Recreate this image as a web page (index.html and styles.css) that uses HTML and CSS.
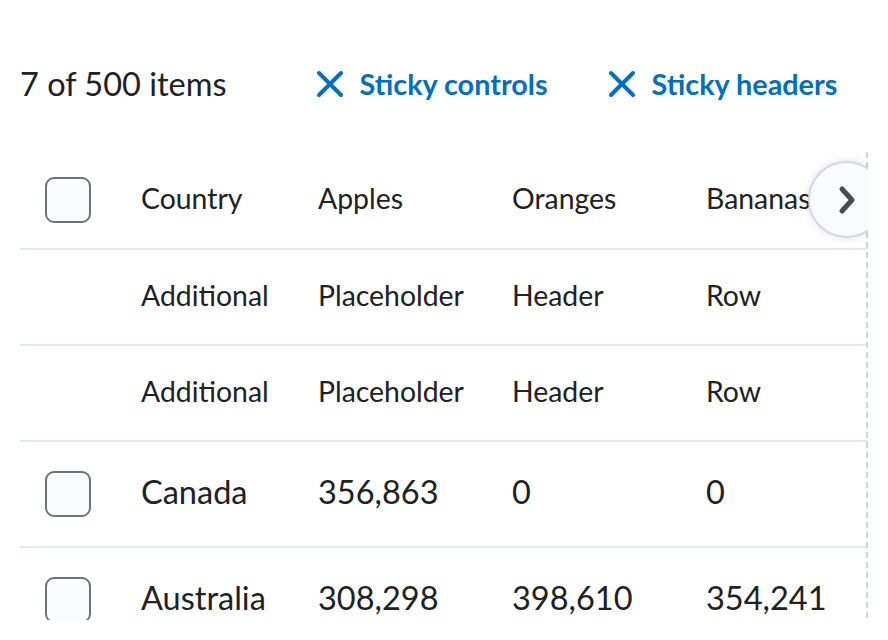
FILE: index.html
```html
<!DOCTYPE html>
<html lang="en">
<head>
<meta charset="utf-8">
<title>Table</title>
<link rel="stylesheet" href="styles.css">
</head>
<body>
<div class="controls">
  <span class="count">7 of 500 items</span>
  <button class="action first">
    <svg class="x-icon" viewBox="0 0 28 28" width="28" height="28"><path d="M3 3 L25 25 M25 3 L3 25" /></svg>
    <span>Sticky controls</span>
  </button>
  <button class="action">
    <svg class="x-icon" viewBox="0 0 28 28" width="28" height="28"><path d="M3 3 L25 25 M25 3 L3 25" /></svg>
    <span>Sticky headers</span>
  </button>
</div>

<div class="wrapper">
  <table class="grid">
    <colgroup>
      <col class="c-sel"><col class="c-country"><col class="c-num"><col class="c-num"><col class="c-num"><col class="c-num"><col class="c-num">
    </colgroup>
    <thead>
      <tr class="head">
        <th class="sel"><span class="checkbox"></span></th>
        <th>Country</th>
        <th>Apples</th>
        <th>Oranges</th>
        <th>Bananas</th>
        <th>Grapes</th>
        <th>Pears</th>
      </tr>
      <tr class="extra">
        <th class="sel"></th>
        <th>Additional</th>
        <th>Placeholder</th>
        <th>Header</th>
        <th>Row</th>
        <th></th>
        <th></th>
      </tr>
      <tr class="extra">
        <th class="sel"></th>
        <th>Additional</th>
        <th>Placeholder</th>
        <th>Header</th>
        <th>Row</th>
        <th></th>
        <th></th>
      </tr>
    </thead>
    <tbody>
      <tr class="row">
        <td class="sel"><span class="checkbox"></span></td>
        <td>Canada</td>
        <td>356,863</td>
        <td>0</td>
        <td>0</td>
        <td>0</td>
        <td>0</td>
      </tr>
      <tr class="row">
        <td class="sel"><span class="checkbox"></span></td>
        <td>Australia</td>
        <td>308,298</td>
        <td>398,610</td>
        <td>354,241</td>
        <td>0</td>
        <td>0</td>
      </tr>
    </tbody>
  </table>
  <button class="scroll-btn" aria-label="Scroll right">
    <svg viewBox="0 0 20 30" width="20" height="30"><path d="M5 4 L15 15 L5 26" /></svg>
  </button>
</div>
</body>
</html>
```

FILE: styles.css
```css
html, body {
  margin: 0;
  padding: 0;
  background: #ffffff;
}

body {
  font-family: Lato, "Noto Sans", sans-serif;
  color: #202122;
  font-size: 28.4px;
  overflow: hidden;
}

.controls {
  display: flex;
  align-items: center;
  height: 40px;
  padding: 64px 0 0 20px;
}

.count {
  font-size: 32.5px;
  line-height: 40px;
}

.action {
  display: flex;
  align-items: center;
  gap: 16px;
  border: 0;
  background: none;
  padding: 0;
  margin-left: 60px;
  font-family: Lato, "Noto Sans", sans-serif;
  font-size: 28.8px;
  font-weight: 700;
  color: #006fbf;
  cursor: pointer;
}

.action.first {
  margin-left: 89px;
}

.x-icon {
  display: block;
  width: 28px;
  height: 28px;
  fill: none;
  stroke: #006fbf;
  stroke-width: 4;
  stroke-linecap: round;
}

.wrapper {
  position: relative;
  margin: 47px 0 0 20px;
  width: 848px;
  height: 469px;
  overflow: hidden;
}

.wrapper::after {
  content: "";
  position: absolute;
  top: 1px;
  right: 0;
  width: 2px;
  height: 466px;
  background: repeating-linear-gradient(to bottom, #cdd5dd 0, #cdd5dd 6px, transparent 6px, transparent 10px);
}

.grid {
  border-collapse: separate;
  border-spacing: 0;
  table-layout: fixed;
  width: 1245px;
}

.c-sel { width: 98px; }
.c-country { width: 177px; }
.c-num { width: 194px; }

.grid th,
.grid td {
  box-sizing: border-box;
  text-align: left;
  font-weight: 400;
  padding: 0 0 4px 23px;
  vertical-align: middle;
  border-bottom: 2px solid #e3e9f1;
  line-height: 40px;
  white-space: nowrap;
}

.grid td {
  font-size: 32.5px;
}

.grid .sel {
  padding: 0 0 0 25px;
}

.head th { height: 99px; }
.extra th { height: 96px; }
.row td { height: 106px; }

.checkbox {
  display: block;
  width: 42px;
  height: 42px;
  border: 2px solid #6e7376;
  border-radius: 9px;
  background: #f9fbff;
}

.scroll-btn {
  position: absolute;
  top: 10px;
  left: 788px;
  width: 77px;
  height: 77px;
  border-radius: 50%;
  border: 2px solid #d3d9e3;
  background: #f9fbff;
  box-shadow: 0 0 8px rgba(0, 0, 0, 0.12);
  display: flex;
  align-items: center;
  justify-content: center;
  padding: 0;
  z-index: 2;
}

.scroll-btn svg {
  display: block;
  fill: none;
  stroke: #494c4e;
  stroke-width: 5;
  stroke-linecap: round;
  stroke-linejoin: round;
}
```
